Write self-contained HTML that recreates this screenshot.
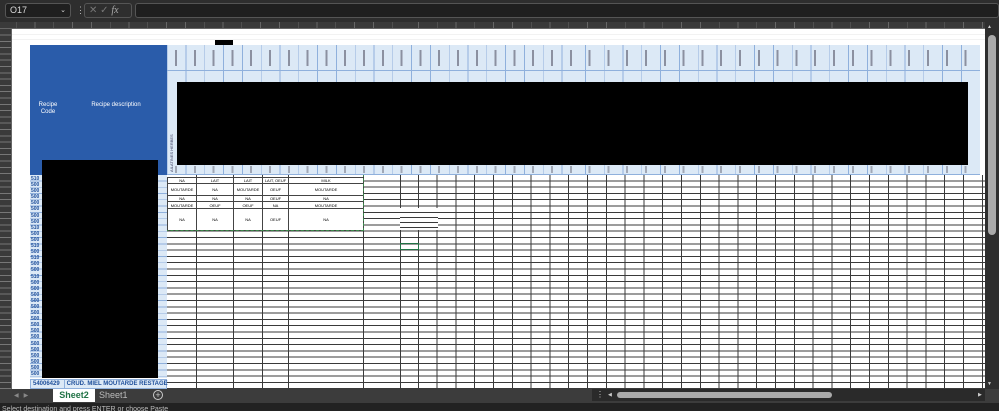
<!DOCTYPE html>
<html><head><meta charset="utf-8"><style>
*{margin:0;padding:0;box-sizing:border-box}
body{width:999px;height:411px;overflow:hidden;background:#fff;font-family:"Liberation Sans",sans-serif;position:relative}
.a{position:absolute}
.t{font-size:4px;color:#000;text-align:center;display:flex;align-items:center;justify-content:center;border-right:1px solid #444;border-bottom:1px solid #444}
</style></head><body>
<div class="a" style="left:0;top:0;width:999px;height:22px;background:#2e2e2e"></div>
<div class="a" style="left:5px;top:3px;width:66px;height:15px;background:#1f1f1f;border:1px solid #555;border-radius:3px;color:#ddd;font-size:9px;line-height:13px;padding-left:4px">O17<span style="position:absolute;right:4px;font-size:7px">&#8964;</span></div>
<div class="a" style="left:76px;top:5px;color:#bbb;font-size:9px">&#8942;</div>
<div class="a" style="left:84px;top:3px;width:48px;height:15px;border:1px solid #555;border-radius:3px;color:#777;font-size:10px;line-height:13px;padding-left:4px">&#10005; &#10003; <i style="font-family:'Liberation Serif';color:#aaa">fx</i></div>
<div class="a" style="left:135px;top:3px;width:864px;height:15px;background:#1f1f1f;border:1px solid #555;border-radius:3px"></div>
<div class="a" style="left:0;top:22px;width:999px;height:7px;background:#3a3a3a;border-bottom:1px solid #666"></div>
<div class="a" style="left:0;top:22px;width:985px;height:7px;background:repeating-linear-gradient(90deg,transparent 0,transparent 18px,#666 18px,#666 18.8px);background-position:400px 0"></div>
<div class="a" style="left:0;top:29px;width:12px;height:360px;background:#3a3a3a;border-right:1px solid #666;background-image:repeating-linear-gradient(180deg,transparent 0,transparent 5.3px,#777 5.3px,#777 6.3px);background-position:0 146px"></div>
<div class="a" style="left:12px;top:29px;width:973px;height:16px;background:repeating-linear-gradient(180deg,transparent 0,transparent 5px,#e4e4e4 5px,#e4e4e4 5.5px)"></div>
<div class="a" style="left:215px;top:40px;width:18px;height:5px;background:#000"></div>
<div class="a" style="left:167px;top:175px;width:818px;height:214px;background-image:repeating-linear-gradient(180deg,transparent 0,transparent 5.3px,#3a3a3a 5.3px,#3a3a3a 6.3px),repeating-linear-gradient(90deg,transparent 0,transparent 17.8px,#3a3a3a 17.8px,#3a3a3a 18.8px);background-position:0 0,233px 0"></div>
<div class="a" style="left:167px;top:175px;width:233px;height:214px;background:#fff;background-image:repeating-linear-gradient(180deg,transparent 0,transparent 5.3px,#3a3a3a 5.3px,#3a3a3a 6.3px)"></div>
<div class="a" style="left:196px;top:175px;width:1px;height:214px;background:#3a3a3a"></div>
<div class="a" style="left:233px;top:175px;width:1px;height:214px;background:#3a3a3a"></div>
<div class="a" style="left:262px;top:175px;width:1px;height:214px;background:#3a3a3a"></div>
<div class="a" style="left:288px;top:175px;width:1px;height:214px;background:#3a3a3a"></div>
<div class="a" style="left:363px;top:175px;width:1px;height:214px;background:#3a3a3a"></div>
<div class="a" style="left:400px;top:175px;width:1px;height:214px;background:#3a3a3a"></div>
<div class="a" style="left:167px;top:177px;width:196px;height:53px;background:#fff;border-top:1px solid #444;border-left:1px solid #444">
<div class="a t" style="left:0;top:0;width:29px;height:6px">NA</div><div class="a t" style="left:29px;top:0;width:37px;height:6px">LAIT</div><div class="a t" style="left:66px;top:0;width:29px;height:6px">LAIT</div><div class="a t" style="left:95px;top:0;width:26px;height:6px">LAIT, OEUF</div><div class="a t" style="left:121px;top:0;width:75px;height:6px">MILK</div>
<div class="a t" style="left:0;top:6px;width:29px;height:12px">MOUTARDE</div><div class="a t" style="left:29px;top:6px;width:37px;height:12px">NA</div><div class="a t" style="left:66px;top:6px;width:29px;height:12px">MOUTARDE</div><div class="a t" style="left:95px;top:6px;width:26px;height:12px">OEUF</div><div class="a t" style="left:121px;top:6px;width:75px;height:12px">MOUTARDE</div>
<div class="a t" style="left:0;top:18px;width:29px;height:6px">NA</div><div class="a t" style="left:29px;top:18px;width:37px;height:6px">NA</div><div class="a t" style="left:66px;top:18px;width:29px;height:6px">NA</div><div class="a t" style="left:95px;top:18px;width:26px;height:6px">OEUF</div><div class="a t" style="left:121px;top:18px;width:75px;height:6px">NA</div>
<div class="a t" style="left:0;top:24px;width:29px;height:7px">MOUTARDE</div><div class="a t" style="left:29px;top:24px;width:37px;height:7px">OEUF</div><div class="a t" style="left:66px;top:24px;width:29px;height:7px">OEUF</div><div class="a t" style="left:95px;top:24px;width:26px;height:7px">NA</div><div class="a t" style="left:121px;top:24px;width:75px;height:7px">MOUTARDE</div>
<div class="a t" style="left:0;top:31px;width:29px;height:22px">NA</div><div class="a t" style="left:29px;top:31px;width:37px;height:22px">NA</div><div class="a t" style="left:66px;top:31px;width:29px;height:22px">NA</div><div class="a t" style="left:95px;top:31px;width:26px;height:22px">OEUF</div><div class="a t" style="left:121px;top:31px;width:75px;height:22px">NA</div>
</div>
<div class="a" style="left:30px;top:45px;width:334px;height:186px;border:1px dashed #3a8a4a;pointer-events:none"></div>
<div class="a" style="left:400px;top:208px;width:38px;height:22px;background:#fff;background-image:repeating-linear-gradient(180deg,transparent 0,transparent 4px,#3a3a3a 4px,#3a3a3a 5px)"></div>
<div class="a" style="left:400px;top:243px;width:19px;height:7px;border:1px solid #217346"></div>
<div class="a" style="left:167px;top:45px;width:813px;height:130px;background:#dce9f6;background-image:repeating-linear-gradient(90deg,transparent 0,transparent 18px,#8fb0dc 18px,#8fb0dc 18.8px);background-position:400px 0;border-bottom:1px solid #8fb0dc"></div>
<div class="a" style="left:167px;top:70px;width:813px;height:1px;background:#8fb0dc"></div>
<div class="a" style="left:167px;top:50px;width:813px;height:16px;background:repeating-linear-gradient(90deg,transparent 0,transparent 8px,#556 8px,#556 10px,transparent 10px,transparent 18.8px);opacity:.6"></div>
<div class="a" style="left:167px;top:166px;width:813px;height:7px;background:repeating-linear-gradient(90deg,transparent 0,transparent 8px,#667 8px,#667 10px,transparent 10px,transparent 18.8px);opacity:.5"></div>
<div class="a" style="left:169px;top:172px;font-size:4px;color:#335;transform:rotate(-90deg);transform-origin:left top;white-space:nowrap">AILATINES HERBES</div>
<div class="a" style="left:177px;top:82px;width:791px;height:83px;background:#000"></div>
<div class="a" style="left:30px;top:45px;width:137px;height:333px;background:#2a5caa"></div>
<div class="a" style="left:36px;top:102px;width:24px;color:#fff;font-size:6px;text-align:center;line-height:7px">Recipe Code</div>
<div class="a" style="left:90px;top:102px;width:52px;color:#fff;font-size:6px;text-align:center;line-height:7px">Recipe description</div>
<div class="a" style="left:30px;top:175px;width:137px;height:203px;background:#dce9f6;background-image:repeating-linear-gradient(180deg,transparent 0,transparent 5.5px,#8fb0dc 5.5px,#8fb0dc 6.3px)"></div>
<div class="a" style="left:31px;top:176px;font-size:5px;color:#1d4e9a;font-weight:bold;line-height:6.1px;width:12px;overflow:hidden">510<br>500<br>500<br>500<br>500<br>500<br>500<br>500<br>510<br>500<br>500<br>510<br>500<br>510<br>500<br>500<br>510<br>500<br>500<br>500<br>500<br>500<br>500<br>500<br>500<br>500<br>500<br>500<br>500<br>500<br>500<br>500<br>500</div>
<div class="a" style="left:42px;top:160px;width:116px;height:218px;background:#000"></div>
<div class="a" style="left:30px;top:379px;width:137px;height:10px;background:#dce9f6;border:1px solid #8fb0dc;font-size:6px;font-weight:bold;color:#1d4e9a;line-height:8px;white-space:nowrap"><span style="display:inline-block;width:34px;padding-left:2px;border-right:1px solid #8fb0dc">54006429</span> CRUD. MIEL MOUTARDE RESTAGE</div>
<div class="a" style="left:985px;top:22px;width:14px;height:367px;background:#2e2e2e"></div>
<div class="a" style="left:988px;top:35px;width:8px;height:200px;background:#aaa;border-radius:4px"></div>
<div class="a" style="left:987px;top:24px;color:#ccc;font-size:5px">&#9650;</div>
<div class="a" style="left:987px;top:381px;color:#ccc;font-size:5px">&#9660;</div>
<div class="a" style="left:0;top:389px;width:999px;height:14px;background:#3c3c3c"></div>
<div class="a" style="left:14px;top:392px;color:#888;font-size:6px">&#9664;&nbsp;&nbsp;&nbsp;&#9654;</div>
<div class="a" style="left:53px;top:389px;width:42px;height:13px;background:#fff;color:#217346;font-weight:bold;font-size:9px;text-align:center;line-height:13px">Sheet2</div>
<div class="a" style="left:99px;top:389px;width:32px;height:13px;color:#bbb;font-size:9px;line-height:13px">Sheet1</div>
<div class="a" style="left:153px;top:390px;width:10px;height:10px;border:1px solid #ccc;border-radius:50%;color:#ccc;font-size:9px;line-height:8px;text-align:center">+</div>
<div class="a" style="left:592px;top:389px;width:393px;height:12px;background:#2a2a2a"></div>
<div class="a" style="left:596px;top:390px;color:#ccc;font-size:8px">&#8942;</div>
<div class="a" style="left:608px;top:392px;color:#ccc;font-size:5px">&#9664;</div>
<div class="a" style="left:617px;top:392px;width:215px;height:6px;background:#aaa;border-radius:3px"></div>
<div class="a" style="left:978px;top:392px;color:#ccc;font-size:5px">&#9654;</div>
<div class="a" style="left:0;top:403px;width:999px;height:8px;background:#222;color:#bbb;font-size:7px;line-height:14px;padding-left:2px;white-space:nowrap;overflow:hidden">Select destination and press ENTER or choose Paste</div>
</body></html>
